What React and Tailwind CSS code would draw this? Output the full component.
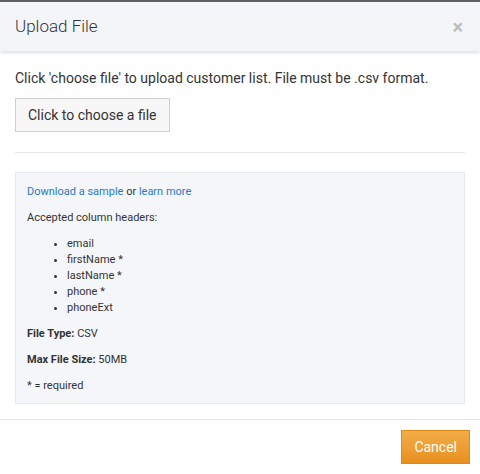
import React from 'react';

const headers = ['email', 'firstName *', 'lastName *', 'phone *', 'phoneExt'];

const UploadFileModal = () => {
  return (
    <div className="w-[480px] h-[474px] bg-white flex flex-col border-t-2 border-[#5f5f5f] text-[#333] font-['Roboto',sans-serif] overflow-hidden">
      {/* Header */}
      <div className="h-[49px] bg-[#f4f5f9] flex items-center justify-between pl-[15px] pr-[17px] shadow-[0_2px_3px_rgba(0,0,0,0.12)] relative z-10">
        <h3 className="text-[17px] font-light text-[#333]">Upload File</h3>
        <span className="text-[#bbb] text-[20px] font-bold leading-none">×</span>
      </div>

      {/* Body */}
      <div className="px-[15px] pt-[17px] flex-1">
        <p className="text-[14px] leading-[20px]">
          Click 'choose file' to upload customer list. File must be .csv format.
        </p>
        <button className="mt-[10px] h-[34px] px-[12px] text-[14px] bg-[#f7f7f7] border border-[#cfcfcf] text-[#333]">
          Click to choose a file
        </button>
        <div className="mt-[20px] border-t border-[#e8e8e8]" />

        <div className="mt-[19px] bg-[#f5f6fa] border border-[#e6e7ea] px-[11px] pt-[11px] pb-[9px] text-[11px] leading-[16px]">
          <p>
            <a className="text-[#2a7ac0]">Download a sample</a> or{' '}
            <a className="text-[#2a7ac0]">learn more</a>
          </p>
          <p className="mt-[10px]">Accepted column headers:</p>
          <ul className="mt-[10px] list-disc pl-[40px]">
            {headers.map((h) => (
              <li key={h}>{h}</li>
            ))}
          </ul>
          <p className="mt-[10px]">
            <b>File Type:</b> CSV
          </p>
          <p className="mt-[10px]">
            <b>Max File Size:</b> 50MB
          </p>
          <p className="mt-[10px]">* = required</p>
        </div>
      </div>

      {/* Footer */}
      <div className="h-[55px] border-t border-[#e5e5e5] flex items-center justify-end pr-[10px]">
        <button className="h-[34px] px-[12px] text-[14px] text-white bg-gradient-to-b from-[#f2ac48] to-[#e8901c] border border-[#e08a1a]">
          Cancel
        </button>
      </div>
    </div>
  );
};

export default function App() {
  return <UploadFileModal />;
}
